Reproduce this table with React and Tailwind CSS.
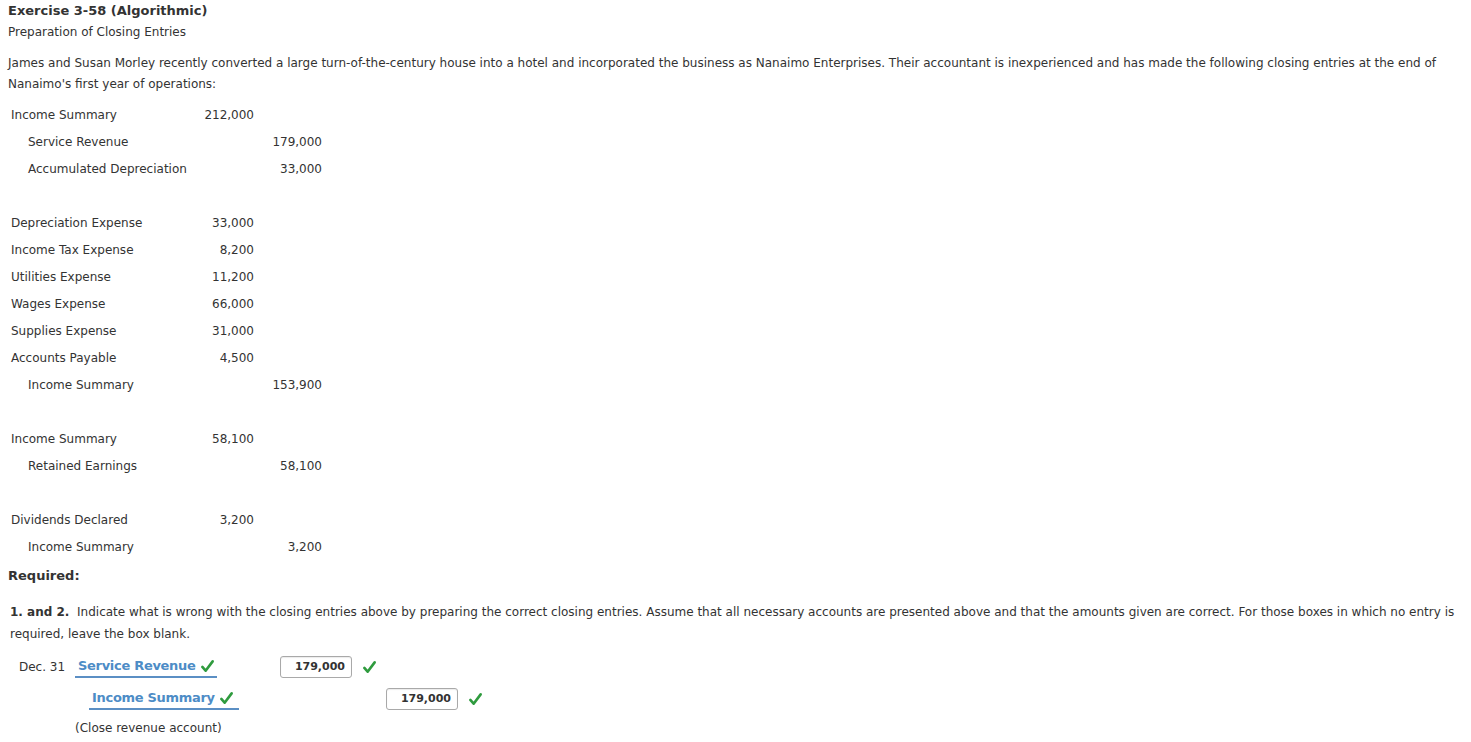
import React from 'react';

const entries = [
  [
    { name: 'Income Summary', dr: '212,000' },
    { name: 'Service Revenue', cr: '179,000' },
    { name: 'Accumulated Depreciation', cr: '33,000' },
  ],
  [
    { name: 'Depreciation Expense', dr: '33,000' },
    { name: 'Income Tax Expense', dr: '8,200' },
    { name: 'Utilities Expense', dr: '11,200' },
    { name: 'Wages Expense', dr: '66,000' },
    { name: 'Supplies Expense', dr: '31,000' },
    { name: 'Accounts Payable', dr: '4,500' },
    { name: 'Income Summary', cr: '153,900' },
  ],
  [
    { name: 'Income Summary', dr: '58,100' },
    { name: 'Retained Earnings', cr: '58,100' },
  ],
  [
    { name: 'Dividends Declared', dr: '3,200' },
    { name: 'Income Summary', cr: '3,200' },
  ],
];

const Check = ({ className = '' }) => (
  <svg viewBox="0 0 16 16" className={`w-[15px] h-[15px] shrink-0 ${className}`}>
    <path d="M2.5 8.5 L6 12.5 L13.5 2.5" fill="none" stroke="#2f9b3e" strokeWidth="2.8" strokeLinecap="round" strokeLinejoin="round" />
  </svg>
);

const AccountPick = ({ label, width }) => (
  <div className={`flex items-center h-[22px] border-b-2 border-[#5b8fc4] whitespace-nowrap shrink-0 ${width}`}>
    <span className="pl-[3px] text-[13px] font-bold text-[#4d8cc6] tracking-[-0.3px]">{label}</span>
    <Check className="ml-[4px]" />
  </div>
);

const AmountBox = ({ value }) => (
  <div className="w-[72px] h-[22px] border border-[#a9a9a9] rounded-[3px] shadow-[inset_0_1px_1px_rgba(0,0,0,0.08)] flex items-center justify-end pr-[6px] text-[11px] font-bold text-[#333]">
    {value}
  </div>
);

export default function App() {
  return (
    <div className="min-h-screen bg-white text-[#333] font-['DejaVu_Sans','Verdana',sans-serif] text-[12px] px-[8px] pt-[2px]">
      <h1 className="text-[13px] font-bold leading-[18px]">Exercise 3-58 (Algorithmic)</h1>
      <p className="mt-[3px] leading-[18px]">Preparation of Closing Entries</p>

      <p className="mt-[12px] leading-[21px]">
        James and Susan Morley recently converted a large turn-of-the-century house into a hotel and incorporated the business as Nanaimo Enterprises. Their accountant is inexperienced and has made the following closing entries at the end of Nanaimo's first year of operations:
      </p>

      <div className="mt-[6px] pl-[3px]">
        {entries.map((group, gi) => (
          <div key={gi} className={gi > 0 ? 'mt-[27px]' : ''}>
            {group.map((row, ri) => (
              <div key={ri} className="flex items-center h-[27px]">
                <div className={`w-[183px] ${row.cr ? 'pl-[17px]' : ''}`}>{row.name}</div>
                <div className="w-[60px] text-right">{row.dr || ''}</div>
                <div className="w-[68px] text-right">{row.cr || ''}</div>
              </div>
            ))}
          </div>
        ))}
      </div>

      <p className="mt-[7px] font-bold text-[13px] leading-[18px]">Required:</p>

      <p className="mt-[16px] pl-[2px] leading-[22px]">
        <span className="font-bold">1. and 2.</span>{'\u00a0 '}Indicate what is wrong with the closing entries above by preparing the correct closing entries. Assume that all necessary accounts are presented above and that the amounts given are correct. For those boxes in which no entry is required, leave the box blank.
      </p>

      <div className="mt-[6px] pl-[11px]">
        <div className="flex items-center h-[32px]">
          <span className="w-[56px] shrink-0">Dec. 31</span>
          <AccountPick label="Service Revenue" width="w-[142px]" />
          <div className="ml-[63px]">
            <AmountBox value="179,000" />
          </div>
          <Check className="ml-[10px]" />
        </div>
        <div className="flex items-center h-[32px]">
          <div className="ml-[70px]">
            <AccountPick label="Income Summary" width="w-[150px]" />
          </div>
          <div className="ml-[147px]">
            <AmountBox value="179,000" />
          </div>
          <Check className="ml-[10px]" />
        </div>
        <p className="ml-[56px] mt-[4px] leading-[18px]">(Close revenue account)</p>
      </div>
    </div>
  );
}
